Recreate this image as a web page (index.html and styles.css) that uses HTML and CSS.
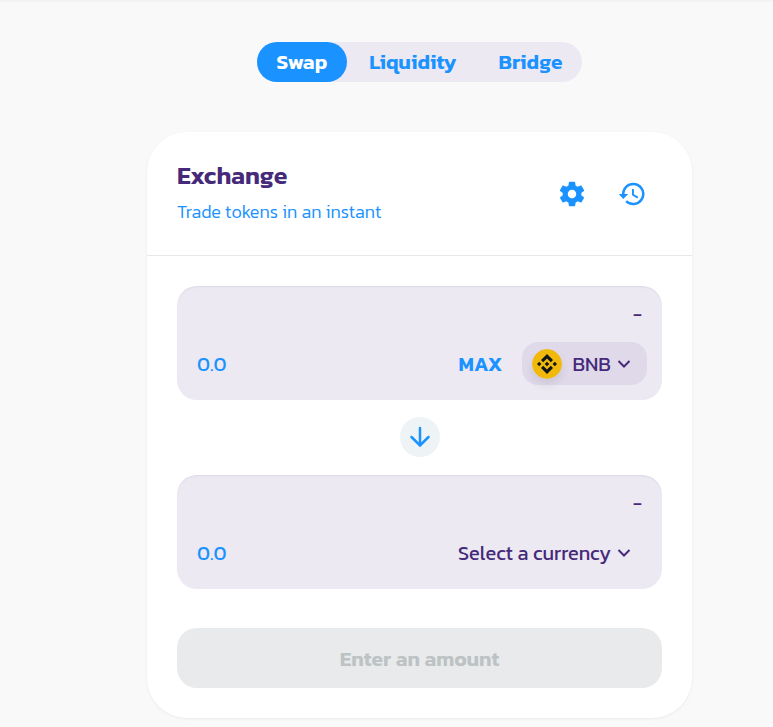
FILE: index.html
```html
<!DOCTYPE html>
<html lang="en">

<head>
    <meta charset="UTF-8">
    <meta name="viewport" content="width=device-width, initial-scale=1.0">
    <title>Exchange</title>
    <link rel="stylesheet" href="styles.css">
</head>

<body>
    <main class="page">
        <nav class="tabs">
            <a class="tab active" href="#swap">Swap</a>
            <a class="tab" href="#liquidity">Liquidity</a>
            <a class="tab" href="#bridge">Bridge</a>
        </nav>

        <section class="card">
            <header class="card-header">
                <div>
                    <h1 class="title">Exchange</h1>
                    <p class="subtitle">Trade tokens in an instant</p>
                </div>
                <div class="actions">
                    <button class="icon-btn" type="button" aria-label="Settings">
                        <svg width="30" height="30" viewBox="0 0 24 24" fill="currentColor">
                            <path d="M19.5 12c0-.3 0-.6-.1-.9l2.1-1.6c.2-.2.3-.4.1-.7l-2-3.4c-.1-.2-.4-.3-.6-.2l-2.5 1a7 7 0 0 0-1.6-.9l-.4-2.7c0-.2-.2-.4-.5-.4h-4c-.3 0-.5.2-.5.4l-.4 2.7a7 7 0 0 0-1.6.9l-2.5-1c-.2-.1-.5 0-.6.2l-2 3.4c-.1.3-.1.5.1.7l2.1 1.6a7 7 0 0 0 0 1.8l-2.1 1.6c-.2.2-.2.4-.1.7l2 3.4c.1.2.4.3.6.2l2.5-1c.5.4 1 .7 1.6.9l.4 2.7c0 .2.2.4.5.4h4c.3 0 .5-.2.5-.4l.4-2.7a7 7 0 0 0 1.6-.9l2.5 1c.2.1.5 0 .6-.2l2-3.4c.1-.3.1-.5-.1-.7l-2.1-1.6c.1-.3.1-.6.1-.9zM12 15.4a3.4 3.4 0 1 1 0-6.8 3.4 3.4 0 0 1 0 6.8z" />
                        </svg>
                    </button>
                    <button class="icon-btn" type="button" aria-label="History">
                        <svg width="30" height="30" viewBox="0 0 24 24" fill="currentColor">
                            <path d="M13 3a9 9 0 0 0-9 9H1.400L5 15.900 9 12H6a7 7 0 1 1 2.060 4.940L6.640 18.360A9 9 0 1 0 13 3zm-1 5v5l4.250 2.520.77-1.280-3.520-2.090V8z" />
                        </svg>
                    </button>
                </div>
            </header>

            <form class="swap-form">
                <div class="panel">
                    <div class="balance">-</div>
                    <div class="row">
                        <input class="amount" type="text" placeholder="0.0" aria-label="From amount">
                        <button class="max" type="button">MAX</button>
                        <button class="currency selected" type="button">
                            <svg class="coin" width="30" height="30" viewBox="0 0 30 30">
                                <circle cx="15" cy="15" r="15" fill="#f0b90b" />
                                <path d="M15 5l6 6-2.200 2.200L15 9.400l-3.800 3.800L9 11zM15 25l6-6-2.200-2.200-3.800 3.800-3.800-3.800L9 19zM15 12.700l2.300 2.300-2.300 2.300-2.300-2.300zM7.200 12.800L9.400 15l-2.200 2.200L5 15zM22.800 12.800L25 15l-2.200 2.200-2.200-2.200z" fill="#12161c" />
                            </svg>
                            <span>BNB</span>
                            <svg class="chevron" width="14" height="10" viewBox="0 0 14 10">
                                <path d="M1.500 2l5.500 5.500L12.500 2" />
                            </svg>
                        </button>
                    </div>
                </div>

                <button class="switch" type="button" aria-label="Switch currencies">
                    <svg width="22" height="22" viewBox="0 0 22 22">
                        <path d="M11 2v17M2.500 11l8.500 8.500 8.500-8.500" />
                    </svg>
                </button>

                <div class="panel">
                    <div class="balance">-</div>
                    <div class="row">
                        <input class="amount" type="text" placeholder="0.0" aria-label="To amount">
                        <button class="currency" type="button">
                            <span>Select a currency</span>
                            <svg class="chevron" width="14" height="10" viewBox="0 0 14 10">
                                <path d="M1.500 2l5.500 5.500L12.500 2" />
                            </svg>
                        </button>
                    </div>
                </div>

                <button class="submit" type="submit" disabled>Enter an amount</button>
            </form>
        </section>
    </main>
</body>

</html>
```
FILE: styles.css
```css
* {
    box-sizing: border-box;
}

body {
    margin: 0;
    background: #f9f9f9;
    border-top: 2px solid #f3f3f3;
    font-family: Kanit, "Noto Sans", sans-serif;
    font-size: 20px;
    color: #452a7a;
}

button,
input {
    border: 0;
    padding: 0;
    background: none;
    font: inherit;
    color: inherit;
}

.page {
    display: flex;
    flex-direction: column;
    align-items: center;
    gap: 50px;
    padding: 40px 0 9px 66px;
}

.tabs {
    display: flex;
    gap: 2px;
    border-radius: 20px;
    background: #ece9f3;
}

.tab {
    padding: 0 20px;
    border-radius: 20px;
    font-size: 21px;
    line-height: 40px;
    font-weight: 600;
    color: #1a92ff;
    text-decoration: none;
}

.active {
    background: #1a92ff;
    color: white;
}

.card {
    width: 100%;
    max-width: 545px;
    border-radius: 40px;
    background: white;
    box-shadow: 0 1px 3px rgba(0, 0, 0, 0.06);
}

.card-header {
    display: flex;
    justify-content: space-between;
    align-items: center;
    padding: 24px 45px 28px 30px;
    border-bottom: 1px solid #e8e8ea;
}

.title {
    margin: 0 0 3px;
    font-size: 25px;
    line-height: 38px;
    font-weight: 600;
}

.subtitle {
    margin: 0;
    font-size: 18px;
    line-height: 30px;
    font-weight: 300;
    color: #1a92ff;
}

.actions {
    display: flex;
    gap: 30px;
    padding-top: 4px;
}

.icon-btn {
    width: 30px;
    height: 30px;
    color: #1a92ff;
}

.icon-btn svg {
    display: block;
}

.swap-form {
    display: flex;
    flex-direction: column;
    padding: 30px;
}

.panel {
    padding: 13px 15px 15px 20px;
    border-radius: 20px;
    background: #ece9f3;
    box-shadow: inset 0 2px 2px -1px rgba(74, 74, 104, 0.1);
}

.balance {
    margin-bottom: 13px;
    padding-right: 5px;
    line-height: 30px;
    text-align: right;
}

.row {
    display: flex;
    align-items: center;
    height: 43px;
}

.amount {
    flex: 1;
    min-width: 0;
    outline: 0;
}

.amount::placeholder {
    color: #1a92ff;
    opacity: 1;
}

.max {
    margin-right: 20px;
    font-weight: 600;
    color: #1a92ff;
}

.currency {
    display: flex;
    align-items: center;
    height: 43px;
    padding: 0 16px 0 10px;
    border-radius: 16px;
}

.selected {
    background: #dfd9ea;
}

.coin {
    margin-right: 10px;
    border-radius: 50%;
    box-shadow: 0 6px 10px rgba(0, 0, 0, 0.08);
}

.chevron {
    margin-left: 6px;
}

.chevron path,
.switch path {
    fill: none;
    stroke: currentColor;
    stroke-width: 2;
}

.switch {
    display: flex;
    align-items: center;
    justify-content: center;
    align-self: center;
    width: 40px;
    height: 40px;
    margin: 17px 0 18px;
    border-radius: 50%;
    background: #eef4f5;
    color: #1a92ff;
}

.switch path {
    stroke-width: 2.5px;
    stroke-linecap: round;
}

.submit {
    height: 60px;
    margin-top: 39px;
    border-radius: 20px;
    background: #e8eaeb;
    font-size: 21px;
    font-weight: 600;
    color: #bdc2c4;
}
```
